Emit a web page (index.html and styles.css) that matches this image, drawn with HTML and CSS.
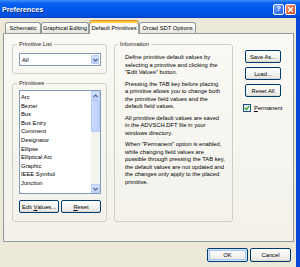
FILE: index.html
```html
<!DOCTYPE html>
<html>
<head>
<meta charset="utf-8">
<title>Preferences</title>
<link rel="stylesheet" href="styles.css">
</head>
<body>
<div class="window">
  <div class="titlebar">
    <span class="title">Preferences</span>
    <span class="tb-btns">
      <span class="tb-btn help">?</span>
      <span class="tb-btn close"><svg width="7" height="7" viewBox="0 0 7 7"><path d="M1 1 L6 6 M6 1 L1 6" stroke="#fff" stroke-width="1.4" fill="none"/></svg></span>
    </span>
  </div>
  <div class="body">
    <div class="tabs">
      <div class="tab t1">Schematic</div>
      <div class="tab t2">Graphical Editing</div>
      <div class="tab t3 active">Default Primitives</div>
      <div class="tab t4">Orcad SDT Options</div>
    </div>
    <div class="panel">
      <div class="left">
        <fieldset class="group plist">
          <legend>Primitive List</legend>
          <div class="combo">
            <span class="combo-text">All</span>
            <span class="combo-btn"><svg width="5" height="4" viewBox="0 0 5 4"><path d="M0.5 1 L2.5 3 L4.5 1" stroke="#4D6185" stroke-width="1.1" fill="none"/></svg></span>
          </div>
        </fieldset>
        <fieldset class="group prims">
          <legend>Primitives</legend>
          <div class="listbox">
            <ul class="items">
              <li>Arc</li>
              <li>Bezier</li>
              <li>Bus</li>
              <li>Bus Entry</li>
              <li>Comment</li>
              <li>Designator</li>
              <li>Ellipse</li>
              <li>Elliptical Arc</li>
              <li>Graphic</li>
              <li>IEEE Symbol</li>
              <li>Junction</li>
            </ul>
            <div class="vscroll">
              <span class="sb-btn"><svg width="5" height="4" viewBox="0 0 5 4"><path d="M0.5 3 L2.5 1 L4.5 3" stroke="#4D6185" stroke-width="1.1" fill="none"/></svg></span>
              <span class="sb-thumb"></span>
              <span class="sb-track"></span>
              <span class="sb-btn"><svg width="5" height="4" viewBox="0 0 5 4"><path d="M0.5 1 L2.5 3 L4.5 1" stroke="#4D6185" stroke-width="1.1" fill="none"/></svg></span>
            </div>
          </div>
          <div class="btnrow">
            <button class="btn">Edit&nbsp;<u>V</u>alues...</button>
            <button class="btn"><u>R</u>eset</button>
          </div>
        </fieldset>
      </div>
      <fieldset class="group info">
        <legend>Information</legend>
        <p>Define primitive default values by<br>selecting a primitive and clicking the<br>"Edit Values" button.</p>
        <p>Pressing the TAB key before placing<br>a primitive allows you to change both<br>the primitive field values and the<br>default field values.</p>
        <p>All primitive default values are saved<br>in the ADVSCH.DFT file in your<br>windows directory.</p>
        <p>When "Permanent" option is enabled,<br>while changing field values are<br>possible through pressing the TAB key,<br>the default values are not updated and<br>the changes only apply to the placed<br>primitive.</p>
      </fieldset>
      <div class="right">
        <button class="btn">Save As...</button>
        <button class="btn">Load...</button>
        <button class="btn">Reset All</button>
        <label class="check">
          <span class="box"><svg width="6" height="6" viewBox="0 0 6 6"><path d="M0.8 3 L2.4 4.6 L5.2 1.2" stroke="#21A121" stroke-width="1.3" fill="none"/></svg></span>
          <span><u>P</u>ermanent</span>
        </label>
      </div>
    </div>
    <div class="footer">
      <button class="btn default">OK</button>
      <button class="btn">Cancel</button>
    </div>
  </div>
</div>
</body>
</html>
```

FILE: styles.css
```css
* { box-sizing: border-box; }
html, body { margin: 0; padding: 0; }
body {
  width: 300px;
  height: 267px;
  overflow: hidden;
  font-family: "Liberation Sans", Arial, sans-serif;
  font-size: 5.8px;
  color: #000;
  background: #ECE9D8;
}
.window {
  width: 300px;
  height: 267px;
  display: flex;
  flex-direction: column;
}
.titlebar {
  height: 18px;
  flex: none;
  display: flex;
  align-items: center;
  justify-content: space-between;
  padding: 0 4px 0 2px;
  background: linear-gradient(#3D8DF8 0%, #0C62F2 18%, #0058EE 45%, #0053E2 80%, #0043CC 100%);
}
.title {
  color: #fff;
  font-weight: bold;
  font-size: 7.2px;
  text-shadow: 1px 1px 0 #0A2A8A;
}
.tb-btns { display: flex; gap: 1px; }
.tb-btn {
  width: 11px;
  height: 11px;
  border: 1px solid #fff;
  border-radius: 2px;
  display: flex;
  align-items: center;
  justify-content: center;
  color: #fff;
  font-weight: bold;
  font-size: 8px;
  line-height: 1;
}
.help { background: linear-gradient(135deg, #6AA2FF, #2462E8); }
.close { background: linear-gradient(135deg, #F2906C, #D4431E); }

.body {
  flex: 1;
  display: flex;
  flex-direction: column;
  border-right: 4px solid #0A46D8;
  padding: 2px 2px 0 3px;
}
.tabs {
  height: 13px;
  display: flex;
  align-items: flex-end;
  padding-left: 2px;
}
.tab {
  height: 11px;
  border: 1px solid #919B9C;
  border-bottom: none;
  border-radius: 3px 3px 0 0;
  background: linear-gradient(#FFFFFF, #F4F3EE 55%, #E4E3DB);
  display: flex;
  align-items: center;
  justify-content: center;
  white-space: nowrap;
}
.t1 { width: 36px; }
.t2 { width: 48px; }
.t3 { width: 50px; }
.t4 { width: 57px; }
.tab.active {
  height: 14px;
  margin-bottom: -1px;
  position: relative;
  z-index: 1;
  background: #FAF9F5;
  border-top: 1px solid #E68B2C;
  box-shadow: inset 0 2px 0 #FFC83C;
  padding-top: 1px;
}
.panel {
  height: 209px;
  border: 1px solid #919B9C;
  background: linear-gradient(#FAF9F5, #F3F1EA);
  display: flex;
  align-items: flex-start;
  padding: 6px 0 0 8px;
}
.group {
  margin: 0;
  border: 1px solid #D0D0BF;
  border-radius: 3px;
  min-width: 0;
}
.group legend {
  padding: 0 2px;
  margin-left: -2px;
  height: 8px;
  line-height: 8px;
  color: #1A1A1A;
}
.left {
  width: 95px;
  display: flex;
  flex-direction: column;
  gap: 5px;
}
.plist { padding: 5px 5px 7px 6px; }
.combo {
  height: 13px;
  border: 1px solid #7F9DB9;
  background: #fff;
  display: flex;
  align-items: center;
  justify-content: space-between;
  padding: 0 1px 0 2px;
}
.combo-btn {
  width: 8px;
  height: 9px;
  border: 1px solid #B9CDF6;
  border-radius: 1px;
  background: linear-gradient(#D5E2FD, #B7CCF8);
  display: flex;
  align-items: center;
  justify-content: center;
}
.prims { padding: 3px 5px 8px 6px; }
.listbox {
  height: 104px;
  border: 1px solid #7F9DB9;
  background: #fff;
  display: flex;
}
.items {
  flex: 1;
  list-style: none;
  margin: 0;
  padding: 2px 0 0 1px;
  line-height: 8.6px;
  white-space: nowrap;
}
.vscroll {
  width: 9px;
  display: flex;
  flex-direction: column;
  background: #F4F3EC;
}
.sb-btn {
  height: 9px;
  border: 1px solid #BACDF6;
  border-radius: 1px;
  background: linear-gradient(#D8E4FD, #BBCFF9);
  display: flex;
  align-items: center;
  justify-content: center;
}
.sb-thumb {
  height: 32px;
  border: 1px solid #B3C8F5;
  border-radius: 1px;
  background: linear-gradient(90deg, #CBDAFC, #BED1FA);
}
.sb-track { flex: 1; }
.btnrow {
  display: flex;
  gap: 2px;
  margin-top: 6px;
}
.btnrow .btn { width: 40px; height: 13px; }
.btn {
  font: inherit;
  color: #000;
  padding: 0;
  margin: 0;
  border: 1px solid #003C74;
  border-radius: 2px;
  background: linear-gradient(#FFFFFF 0%, #F6F6F3 45%, #ECEBE6 85%, #D8D3C8 100%);
  display: flex;
  align-items: center;
  justify-content: center;
  white-space: nowrap;
}
.info {
  width: 119px;
  height: 182px;
  margin-left: 7px;
  padding: 6px 2px 0 10px;
}
.info legend { margin-left: -7px; }
.info p {
  margin: 0 0 4px;
  line-height: 7.5px;
  white-space: nowrap;
}
.right {
  width: 36px;
  margin-left: 12px;
  padding-top: 10px;
  display: flex;
  flex-direction: column;
  gap: 4px;
}
.right .btn { height: 13px; }
.check {
  display: flex;
  align-items: center;
  gap: 3px;
  margin: 3px 0 0 -2px;
  white-space: nowrap;
}
.box {
  width: 8px;
  height: 8px;
  border: 1px solid #1C5180;
  background: linear-gradient(135deg, #DCDCD7, #FFFFFF);
  display: flex;
  align-items: center;
  justify-content: center;
}
.footer {
  display: flex;
  justify-content: flex-end;
  gap: 2px;
  padding: 6px 3px 0 0;
}
.footer .btn { width: 41px; height: 14px; }
.btn.default { box-shadow: inset 0 0 0 1px #CEE7FF, inset 0 0 0 2px #A9C4F0; }
```
